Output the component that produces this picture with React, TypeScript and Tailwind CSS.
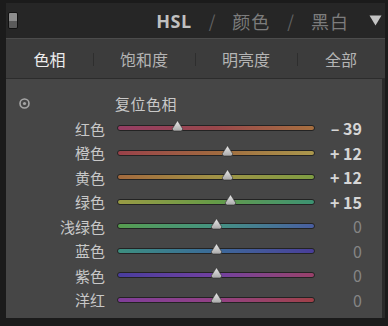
import React from 'react';

interface HueRow {
  label: string;
  value: number;
  track: string;
}

const rows: HueRow[] = [
  { label: '红色', value: -39, track: 'bg-linear-to-r from-[#a53c6a] via-[#a8484c] to-[#b9773e]' },
  { label: '橙色', value: 12, track: 'bg-linear-to-r from-[#a8404a] via-[#b0703e] to-[#bca64e]' },
  { label: '黄色', value: 12, track: 'bg-linear-to-r from-[#b4703c] via-[#b0a046] to-[#88ac42]' },
  { label: '绿色', value: 15, track: 'bg-linear-to-r from-[#a8aa44] via-[#6aaa48] to-[#3aa07a]' },
  { label: '浅绿色', value: 0, track: 'bg-linear-to-r from-[#5aac50] via-[#44a08c] to-[#4a62b0]' },
  { label: '蓝色', value: 0, track: 'bg-linear-to-r from-[#3c9c8a] via-[#3a70a8] to-[#4a3ca8]' },
  { label: '紫色', value: 0, track: 'bg-linear-to-r from-[#4a3cae] via-[#7a40b0] to-[#a84070]' },
  { label: '洋红', value: 0, track: 'bg-linear-to-r from-[#8a3ca8] via-[#a04090] to-[#b04048]' },
];

const TRACK_W = 198;

const Thumb: React.FC = () => (
  <svg width="13" height="12" viewBox="0 0 13 12">
    <defs>
      <linearGradient id="thumbFill" x1="0" y1="0" x2="0" y2="1">
        <stop offset="0" stopColor="#ececec" />
        <stop offset="1" stopColor="#a8a8a8" />
      </linearGradient>
    </defs>
    <path d="M6.5 0.5 L11.6 8.6 Q12.2 11 9.6 11 L3.4 11 Q0.8 11 1.4 8.6 Z" fill="url(#thumbFill)" stroke="#2a2a2a" strokeWidth="0.6" />
  </svg>
);

const formatValue = (v: number) => {
  if (v === 0) return '0';
  return v > 0 ? `+ ${v}` : `– ${Math.abs(v)}`;
};

const SliderRow: React.FC<{ row: HueRow }> = ({ row }) => {
  const pos = ((row.value + 100) / 200) * TRACK_W;
  return (
    <div className="flex items-center h-[24.5px]">
      <div className="w-[99px] text-right text-[15px] text-[#c8c8c8] leading-none">{row.label}</div>
      <div className="ml-[12px] relative w-[198px] h-[6px]">
        <div className={`w-full h-full rounded-full border border-[#1e1e1e] opacity-85 ${row.track}`} />
        <div className="absolute top-[-5px]" style={{ left: pos - 6.5 }}>
          <Thumb />
        </div>
      </div>
      <div
        className={`flex-1 text-right pr-[20px] text-[16px] leading-none ${
          row.value === 0 ? 'text-[#858585]' : 'text-[#d6d6d6] font-bold'
        }`}
      >
        {formatValue(row.value)}
      </div>
    </div>
  );
};

const tabs = [
  { name: '色相', width: 'w-[87px]', active: true },
  { name: '饱和度', width: 'w-[102px]', active: false },
  { name: '明亮度', width: 'w-[102px]', active: false },
  { name: '全部', width: 'flex-1', active: false },
];

export default function App() {
  return (
    <div
      className="w-[388px] h-[326px] bg-[#1b1b1b] flex flex-col pl-[6px] pr-[3px] pt-[3px] pb-[8px] overflow-hidden"
      style={{ fontFamily: '"Noto Sans CJK SC", "Noto Sans", sans-serif' }}
    >
      {/* header */}
      <div className="h-[35px] bg-[#262626] flex items-center relative">
        <div className="ml-[2px] w-[10px] h-[17px] rounded-[2px] border border-[#111] overflow-hidden flex flex-col">
          <div className="h-1/2 bg-[#8c8c8c]" />
          <div className="h-1/2 bg-[#5a5a5a]" />
        </div>
        <div className="flex-1" />
        <div className="flex items-center text-[18px] leading-none">
          <span className="text-[#c0c0c0] font-bold tracking-[0.5px]" style={{ fontFamily: '"Open Sans", "Noto Sans", sans-serif' }}>HSL</span>
          <span className="text-[#626262] mx-[17px] text-[17px]">/</span>
          <span className="text-[#7c7c7c] tracking-[1px]">颜色</span>
          <span className="text-[#626262] mx-[17px] text-[17px]">/</span>
          <span className="text-[#7c7c7c] tracking-[1px]">黑白</span>
          <svg width="13" height="11" viewBox="0 0 13 11" className="ml-[20px] mr-[3px]">
            <path d="M0.5 0.5 L12.5 0.5 L6.5 10.5 Z" fill="#c4c4c4" />
          </svg>
        </div>
      </div>

      {/* tabs */}
      <div className="h-[41px] bg-[#3c3c3c] border-t border-[#4c4c4c] border-b border-b-[#2c2c2c] flex items-center">
        {tabs.map((t, i) => (
          <div key={t.name} className={`${t.width} flex items-center h-full relative`}>
            {i > 0 && <div className="absolute left-0 top-[14px] w-px h-[13px] bg-[#2e2e2e]" />}
            <div
              className={`flex-1 text-center text-[16px] leading-none ${
                t.active ? 'text-[#ececec]' : 'text-[#b4b4b4]'
              }`}
            >
              {t.name}
            </div>
          </div>
        ))}
      </div>

      {/* body */}
      <div className="flex-1 bg-[#464646] border-r-[3px] border-[#2a2a2a] pt-[11px]">
        <div className="flex items-center h-[26px]">
          <svg width="11" height="11" viewBox="0 0 11 11" className="ml-[13px]">
            <circle cx="5.5" cy="5.5" r="4.5" fill="none" stroke="#a6a6a6" strokeWidth="1.6" />
            <circle cx="5.5" cy="5.5" r="1.6" fill="#a6a6a6" />
          </svg>
          <span className="ml-[85px] text-[15px] text-[#c8c8c8] leading-none tracking-[0.5px]">复位色相</span>
        </div>
        {rows.map((r) => (
          <SliderRow key={r.label} row={r} />
        ))}
      </div>
    </div>
  );
}
